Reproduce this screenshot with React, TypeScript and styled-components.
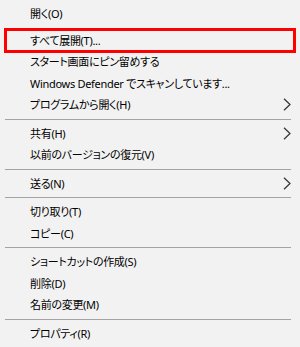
import React from "react";
import styled, { createGlobalStyle } from "styled-components";

const GlobalStyle = createGlobalStyle`
  html, body {
    margin: 0;
    padding: 0;
    background: #f2f2f2;
  }
`;

const Menu = styled.ul`
  list-style: none;
  margin: 0;
  padding: 3px 0 0 0;
  width: 300px;
  height: 347px;
  box-sizing: border-box;
  background: #f2f2f2;
  font-family: "Noto Sans", "Noto Sans CJK JP", sans-serif;
  font-size: 11px;
  letter-spacing: -0.3px;
  font-feature-settings: "palt";
  color: #000;
  overflow: hidden;
`;

const Item = styled.li<{ $marked?: boolean; $gap?: number }>`
  position: relative;
  display: flex;
  align-items: center;
  justify-content: space-between;
  height: 21.5px;
  margin-top: ${(p) => p.$gap ?? 0}px;
  padding: 0 9px 0 30px;
  white-space: nowrap;

  ${(p) =>
    p.$marked &&
    `
    &::after {
      content: "";
      position: absolute;
      left: 4px;
      right: 4px;
      top: -1.25px;
      bottom: -2.25px;
      border: 3px solid #ff0000;
      box-sizing: border-box;
    }
  `}
`;

const Label = styled.span`
  line-height: 1;
`;

const Separator = styled.li`
  height: 7px;
  display: flex;
  align-items: center;
  padding: 0 9px 0 5px;

  &::before {
    content: "";
    flex: 1;
    height: 1px;
    background: #a3a3a3;
  }
`;

const Chevron = () => (
  <svg width="8" height="13" viewBox="0 0 8 13" aria-hidden="true">
    <polyline points="1,0.8 7,6.5 1,12.2" fill="none" stroke="#333" strokeWidth="1.2" />
  </svg>
);

type Entry =
  | { kind: "item"; label: string; sub?: boolean; marked?: boolean; gap?: number }
  | { kind: "sep" };

const entries: Entry[] = [
  { kind: "item", label: "開く(O)" },
  { kind: "item", label: "すべて展開(T)...", marked: true, gap: 5 },
  { kind: "item", label: "スタート画面にピン留めする" },
  { kind: "item", label: "Windows Defender でスキャンしています..." },
  { kind: "item", label: "プログラムから開く(H)", sub: true },
  { kind: "sep" },
  { kind: "item", label: "共有(H)", sub: true },
  { kind: "item", label: "以前のバージョンの復元(V)" },
  { kind: "sep" },
  { kind: "item", label: "送る(N)", sub: true },
  { kind: "sep" },
  { kind: "item", label: "切り取り(T)" },
  { kind: "item", label: "コピー(C)" },
  { kind: "sep" },
  { kind: "item", label: "ショートカットの作成(S)" },
  { kind: "item", label: "削除(D)" },
  { kind: "item", label: "名前の変更(M)" },
  { kind: "sep" },
  { kind: "item", label: "プロパティ(R)" },
];

export default function App() {
  return (
    <>
      <GlobalStyle />
      <Menu>
        {entries.map((e, i) =>
          e.kind === "sep" ? (
            <Separator key={i} />
          ) : (
            <Item key={i} $marked={e.marked} $gap={e.gap}>
              <Label>{e.label}</Label>
              {e.sub && <Chevron />}
            </Item>
          )
        )}
      </Menu>
    </>
  );
}
